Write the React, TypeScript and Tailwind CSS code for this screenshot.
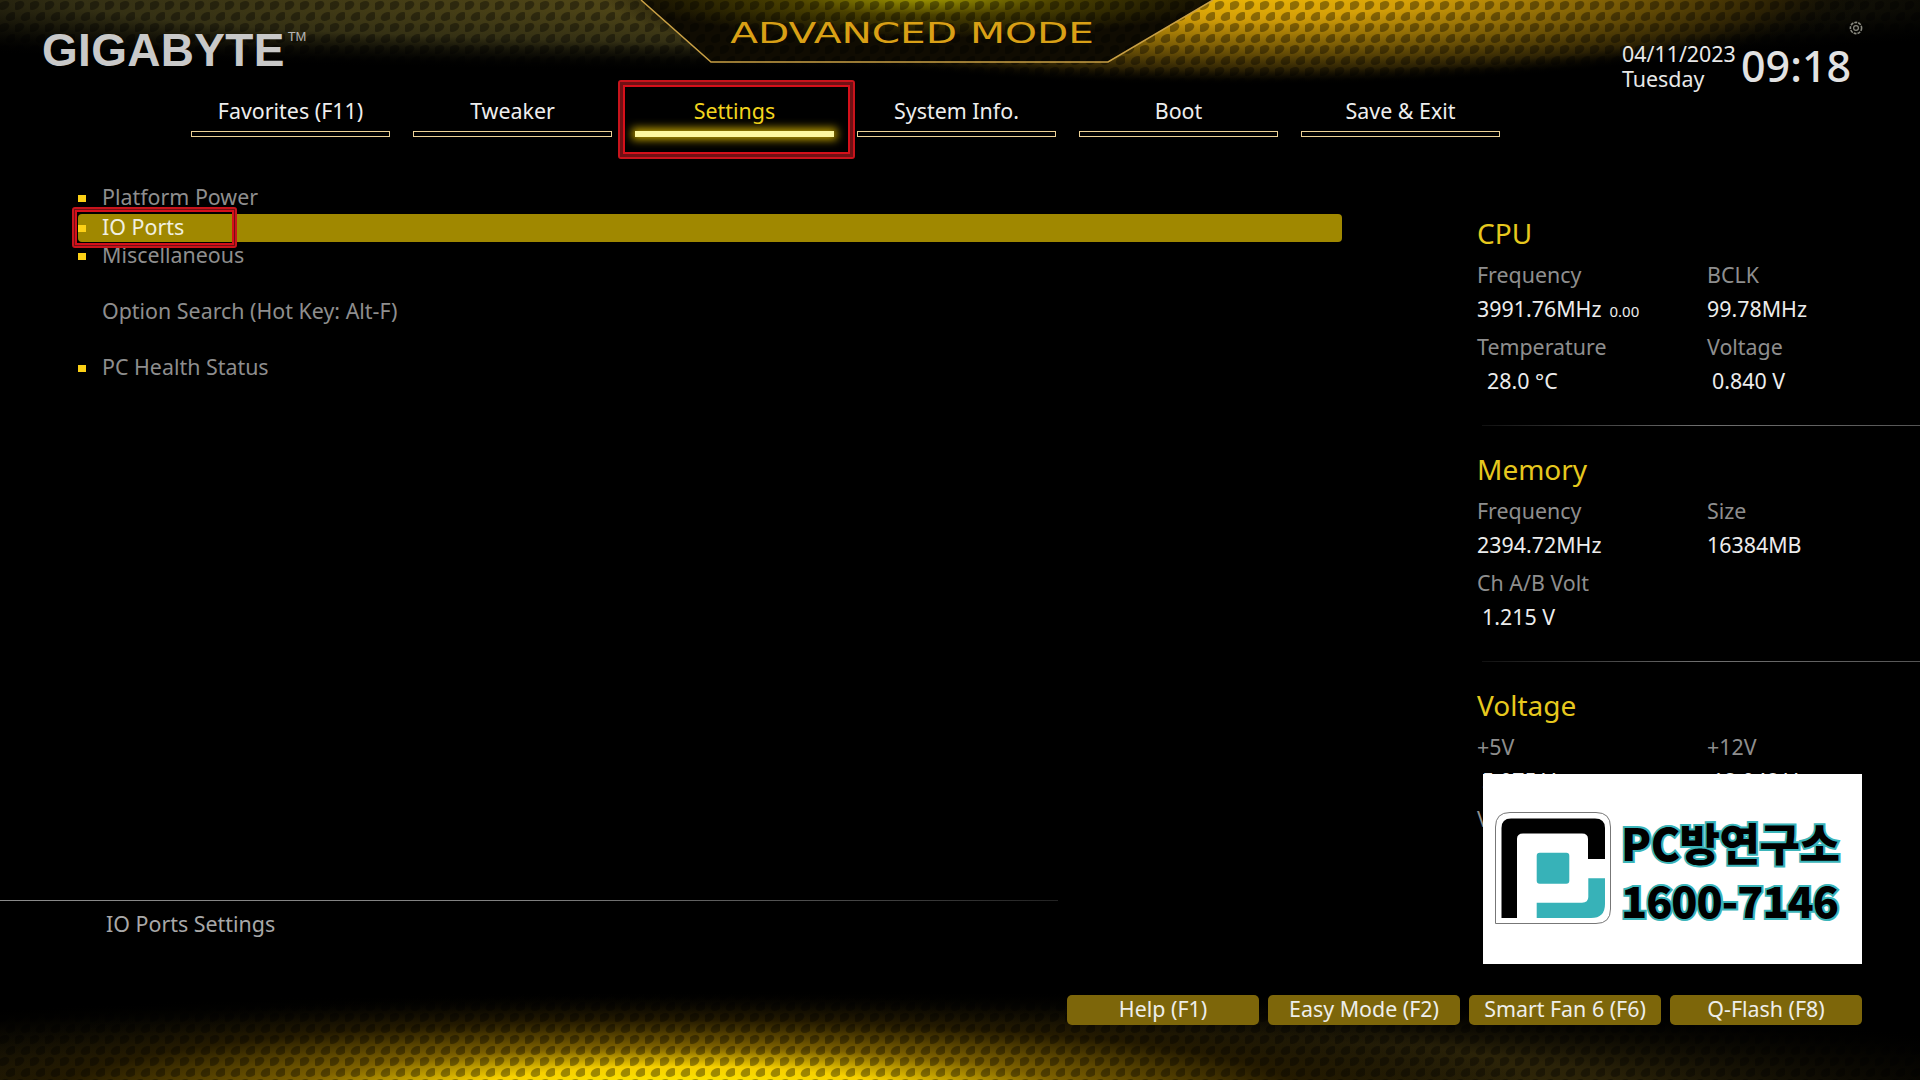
const uiFont = "font-['Noto_Sans','Open_Sans',sans-serif]"

const tabs = ['Favorites (F11)', 'Tweaker', 'Settings', 'System Info.', 'Boot', 'Save & Exit']
const footerButtons = ['Help (F1)', 'Easy Mode (F2)', 'Smart Fan 6 (F6)', 'Q-Flash (F8)']

function Backdrop() {
  return (
    <svg className="absolute inset-0" width="1920" height="1080" viewBox="0 0 1920 1080">
      <defs>
        <radialGradient id="topGlow" gradientUnits="userSpaceOnUse" cx="0" cy="0" r="1" gradientTransform="translate(1240 -10) scale(640 95)">
          <stop offset="0" stopColor="#f2bc06" />
          <stop offset="0.3" stopColor="#d49f08" />
          <stop offset="0.6" stopColor="#7a5c06" />
          <stop offset="0.85" stopColor="#2a2004" />
          <stop offset="1" stopColor="#000000" stopOpacity="0" />
        </radialGradient>
        <radialGradient id="topWash" gradientUnits="userSpaceOnUse" cx="0" cy="0" r="1" gradientTransform="translate(860 0) scale(1300 72)">
          <stop offset="0" stopColor="#5c5018" />
          <stop offset="0.6" stopColor="#343014" />
          <stop offset="1" stopColor="#000000" stopOpacity="0" />
        </radialGradient>
        <radialGradient id="panelGlow" gradientUnits="userSpaceOnUse" cx="0" cy="0" r="1" gradientTransform="translate(925 -4) scale(300 42)">
          <stop offset="0" stopColor="#a8a000" />
          <stop offset="0.45" stopColor="#4c4200" />
          <stop offset="1" stopColor="#100c02" />
        </radialGradient>
        <radialGradient id="bottomGlow" gradientUnits="userSpaceOnUse" cx="0" cy="0" r="1" gradientTransform="translate(680 1092) scale(860 100)">
          <stop offset="0" stopColor="#fff000" />
          <stop offset="0.25" stopColor="#f6d000" />
          <stop offset="0.45" stopColor="#7c6000" />
          <stop offset="0.72" stopColor="#241a00" />
          <stop offset="1" stopColor="#000000" stopOpacity="0" />
        </radialGradient>
        <radialGradient id="bottomWash" gradientUnits="userSpaceOnUse" cx="0" cy="0" r="1" gradientTransform="translate(800 1085) scale(1350 95)">
          <stop offset="0" stopColor="#4c3c06" />
          <stop offset="0.6" stopColor="#2a2208" />
          <stop offset="1" stopColor="#000000" stopOpacity="0" />
        </radialGradient>
        <pattern id="cells" width="15" height="22" patternUnits="userSpaceOnUse">
          <ellipse cx="3.75" cy="5.5" rx="5.9" ry="4" transform="rotate(-28 3.75 5.5)" fill="#000000" fillOpacity="0.36" />
          <ellipse cx="11.25" cy="16.5" rx="5.9" ry="4" transform="rotate(-28 11.25 16.5)" fill="#000000" fillOpacity="0.36" />
        </pattern>
      </defs>
      <rect width="1920" height="95" fill="url(#topWash)" />
      <rect width="1920" height="95" fill="url(#topGlow)" />
      <polygon points="641,0 711,62 1108,62 1213,0" fill="url(#panelGlow)" />
      <rect width="1920" height="95" fill="url(#cells)" />
      <polyline points="641,0 711,62 1108,62 1213,0" fill="none" stroke="#c9a045" strokeWidth="1.5" />
      <rect y="960" width="1920" height="120" fill="url(#bottomWash)" />
      <rect y="960" width="1920" height="120" fill="url(#bottomGlow)" />
      <rect y="960" width="1920" height="120" fill="url(#cells)" />
    </svg>
  )
}

function RedFrame({ className, gap }: { className: string; gap: string }) {
  return (
    <div className={`absolute border-2 border-[#c8141c] rounded-[3px] ${className}`}>
      <div className={`h-full border-[#701014] ${gap}`}>
        <div className="h-full border-2 border-[#d5101a]" />
      </div>
    </div>
  )
}

function MenuRow({ label, bullet = true, active = false, className = '' }: { label: string; bullet?: boolean; active?: boolean; className?: string }) {
  return (
    <div className={`flex items-center h-[28px] w-[1264px] rounded-[4px] ${active ? 'bg-[#a08800] text-[#f0f0e0]' : 'text-[#8e8e8e]'} ${className}`}>
      <span className={`w-[8px] h-[7px] mr-[16px] ${bullet ? 'bg-[#fcd116]' : ''}`} />
      <span className="text-[21.4px] leading-[28px] -mt-[3px]">{label}</span>
    </div>
  )
}

function StatLabel({ text, className = '' }: { text: string; className?: string }) {
  return <div className={`h-[34px] text-[21.4px] leading-[34px] text-[#8e8e8e] ${className}`}>{text}</div>
}

function StatValue({ text, indent = '', small }: { text: string; indent?: string; small?: string }) {
  return (
    <div className={`h-[34px] text-[21.4px] leading-[34px] text-[#ececec] whitespace-nowrap ${indent}`}>
      {text}
      {small && <span className="ml-[8px] text-[15px]">{small}</span>}
    </div>
  )
}

function Section({ title, children }: { title: string; children: React.ReactNode }) {
  return (
    <div className="h-[236px]">
      <div className="h-[34px] text-[28px] leading-[34px] text-[#e6c81e] mb-[8px]">{title}</div>
      <div className="grid grid-cols-[230px_1fr]">{children}</div>
    </div>
  )
}

function LogoCard() {
  return (
    <div className="absolute left-[1483px] top-[774px] w-[379px] h-[190px] bg-white flex items-center pl-[12px] pb-[2px]">
      <svg width="116" height="112" viewBox="0 0 116 112" className="shrink-0">
        <path d="M0.5 111.5V15Q0.5 0.5 15 0.5H101Q115.5 0.5 115.5 15V97Q115.5 111.5 101 111.5Z" fill="#ffffff" stroke="#777777" strokeWidth="1" />
        <path d="M6.5 106V16Q6.5 6.5 16 6.5H100Q110 6.5 110 16V47H93V27Q93 21.5 87 21.5H28Q22 21.5 22 27V106Z" fill="#000000" />
        <rect x="41.7" y="40.7" width="32.6" height="31" rx="3" fill="#37b2b8" />
        <path d="M41.7 106V90.7H87Q93.3 90.7 93.3 85V66.3H110V92Q110 106 96 106Z" fill="#37b2b8" />
      </svg>
      <div className="ml-[10px] pt-[6px] flex flex-col font-['Noto_Sans_CJK_KR',sans-serif] font-black text-black [-webkit-text-stroke:4px_#3bb5ba] [paint-order:stroke_fill] whitespace-nowrap">
        <span className="text-[44px] leading-[57px] tracking-[-0.5px]">PC방연구소</span>
        <span className="text-[43px] leading-[57px] tracking-[-1px]">1600-7146</span>
      </div>
    </div>
  )
}

export default function App() {
  return (
    <div className={`relative w-[1920px] h-[1080px] overflow-hidden bg-black ${uiFont}`}>
      <Backdrop />

      <div className="relative flex flex-col h-full">
        <header className="flex h-[96px]">
          <div className="w-[728px] pl-[42px] pt-[27px] flex items-start font-['Liberation_Sans',sans-serif]">
            <span className="text-[46px] leading-none font-bold tracking-[0.3px] text-[#c9c9c9]">GIGABYTE</span>
            <span className="ml-[3px] mt-[3px] text-[13px] leading-none text-[#b5b5b5]">TM</span>
          </div>
          <div className="w-[368px] pt-[15px] flex justify-center font-['DejaVu_Sans',sans-serif] text-[29px] leading-[36px] scale-x-[1.4] text-[#d9a016] whitespace-nowrap">
            ADVANCED MODE
          </div>
          <div className="flex-1 flex flex-col">
            <svg className="self-end mt-[21px] mr-[57px] text-[#8a8a80]" width="14" height="14" viewBox="0 0 14 14" fill="none" stroke="currentColor">
              <circle cx="7" cy="7" r="5.6" strokeWidth="1.6" strokeDasharray="3 1" />
              <circle cx="7" cy="7" r="2.4" strokeWidth="1.2" />
            </svg>
            <div className="flex mt-[7px] pl-[526px] text-[#e8e8e8]">
              <div className="w-[119px] text-[21.4px] leading-[24.5px] whitespace-nowrap">
                <div>04/11/2023</div>
                <div>Tuesday</div>
              </div>
              <div className="text-[43px] leading-[48px] font-medium text-[#e2e2e2]">09:18</div>
            </div>
          </div>
        </header>

        <nav className="flex h-[45px] pl-[191px] gap-[23px]">
          {tabs.map((tab) => {
            const selected = tab === 'Settings'
            return (
              <div key={tab} className="w-[199px] flex flex-col items-center">
                <div className={`h-[35px] pt-[1px] text-[21.4px] leading-[28px] ${selected ? 'text-[#f2d41e]' : 'text-[#eeeeee]'}`}>{tab}</div>
                <div className={`w-full h-[6px] ${selected ? 'bg-[#fdf8a0] shadow-[0_0_8px_3px_#b89a00]' : 'border border-[#ecd196]'}`} />
              </div>
            )
          })}
        </nav>

        <main className="flex h-[759px]">
          <div className="w-[1477px] pl-[78px] pt-[43px]">
            <MenuRow label="Platform Power" />
            <MenuRow label="IO Ports" active className="mt-[2px]" />
            <MenuRow label="Miscellaneous" />
            <MenuRow label="Option Search (Hot Key: Alt-F)" bullet={false} className="mt-[28px]" />
            <MenuRow label="PC Health Status" className="mt-[28px]" />
          </div>

          <aside className="flex-1 pt-[75px]">
            <Section title="CPU">
              <StatLabel text="Frequency" />
              <StatLabel text="BCLK" />
              <StatValue text="3991.76MHz" small="0.00" />
              <StatValue text="99.78MHz" />
              <StatLabel text="Temperature" className="mt-[4px]" />
              <StatLabel text="Voltage" className="mt-[4px]" />
              <StatValue text="28.0 °C" indent="pl-[10px]" />
              <StatValue text="0.840 V" indent="pl-[5px]" />
              <div className="col-span-2 mt-[27px] ml-[5px] h-[1px] bg-gradient-to-r from-[#111111] via-[#707070] to-[#555555]" />
            </Section>
            <Section title="Memory">
              <StatLabel text="Frequency" />
              <StatLabel text="Size" />
              <StatValue text="2394.72MHz" />
              <StatValue text="16384MB" />
              <StatLabel text="Ch A/B Volt" className="mt-[4px]" />
              <div />
              <StatValue text="1.215 V" indent="pl-[5px]" />
              <div />
              <div className="col-span-2 mt-[27px] ml-[5px] h-[1px] bg-gradient-to-r from-[#111111] via-[#707070] to-[#555555]" />
            </Section>
            <Section title="Voltage">
              <StatLabel text="+5V" />
              <StatLabel text="+12V" />
              <StatValue text="5.075 V" indent="pl-[5px]" />
              <StatValue text="12.048 V" indent="pl-[5px]" />
              <StatLabel text="VCCIO" className="mt-[4px]" />
            </Section>
          </aside>
        </main>

        <footer className="flex-1 flex flex-col">
          <div className="w-[1058px] h-[1px] bg-gradient-to-r from-[#8a8a8a] via-[#808080] to-[#222222]" />
          <div className="pl-[106px] mt-[9px] h-[28px] text-[21.4px] leading-[28px] text-[#a8a8a8]">IO Ports Settings</div>
          <div className="flex justify-end gap-[9px] pr-[58px] mt-[57px]">
            {footerButtons.map((label) => (
              <div key={label} className="w-[192px] h-[30px] rounded-[5px] bg-[#7d660a] text-center text-[21.4px] leading-[28px] text-[#eeeeea] whitespace-nowrap">
                {label}
              </div>
            ))}
          </div>
        </footer>
      </div>

      <LogoCard />
      <RedFrame className="left-[618px] top-[80px] w-[237px] h-[79px]" gap="border-[3px]" />
      <RedFrame className="left-[72px] top-[207px] w-[165px] h-[41px]" gap="border" />
    </div>
  )
}
